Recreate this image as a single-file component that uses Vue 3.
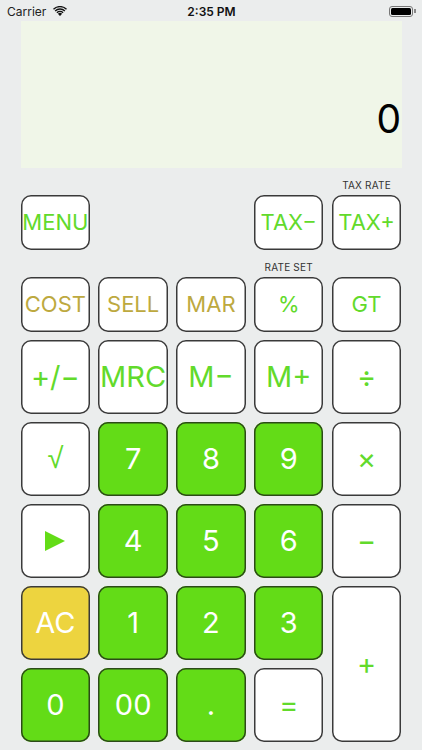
<script setup>
const keys = [
  { t: 'COST', c: 'white gold s24' },
  { t: 'SELL', c: 'white gold s24' },
  { t: 'MAR', c: 'white gold s24' },
  { t: '%', c: 'white s24', label: 'RATE SET' },
  { t: 'GT', c: 'white s24' },
  { t: '+/−', c: 'white s30' },
  { t: 'MRC', c: 'white s30' },
  { t: 'M−', c: 'white s30' },
  { t: 'M+', c: 'white s30' },
  { t: '÷', c: 'white s30' },
  { t: '√', c: 'white s30 root' },
  { t: '7', c: 'green s30' },
  { t: '8', c: 'green s30' },
  { t: '9', c: 'green s30' },
  { t: '×', c: 'white s30' },
  { t: '', c: 'white', play: true },
  { t: '4', c: 'green s30' },
  { t: '5', c: 'green s30' },
  { t: '6', c: 'green s30' },
  { t: '−', c: 'white s30' },
  { t: 'AC', c: 'yellow s30' },
  { t: '1', c: 'green s30' },
  { t: '2', c: 'green s30' },
  { t: '3', c: 'green s30' },
  { t: '+', c: 'white s30 plus' },
  { t: '0', c: 'green s30' },
  { t: '00', c: 'green s30' },
  { t: '.', c: 'green s30' },
  { t: '=', c: 'white s30' },
]
</script>

<template>
  <div class="page">
    <header class="status">
      <div class="left">
        <span>Carrier</span>
        <svg class="wifi" viewBox="0 0 16 12" width="14" height="10.5">
          <path d="M8 11.5 5.6 8.9a3.4 3.4 0 0 1 4.8 0Z" fill="#111" />
          <path d="M3.9 7.2a5.9 5.9 0 0 1 8.2 0l-1.1 1.2a4.3 4.3 0 0 0-6 0Z" fill="#111" />
          <path d="M1.9 5.1a8.8 8.8 0 0 1 12.2 0L13 6.3a7.2 7.2 0 0 0-10 0Z" fill="#111" />
          <path d="M0 3.1a11.6 11.6 0 0 1 16 0l-1.1 1.2a10 10 0 0 0-13.8 0Z" fill="#111" />
        </svg>
      </div>
      <div class="time">2:35 PM</div>
      <div class="right">
        <span class="battery"><span class="charge"></span></span>
        <span class="nub"></span>
      </div>
    </header>

    <section class="display">
      <span class="value">0</span>
    </section>

    <section class="pad top">
      <button class="key white s24">MENU</button>
      <button class="key white s24 tax-minus">TAX−</button>
      <button class="key white s24">
        <span class="label">TAX RATE</span>TAX+
      </button>
    </section>

    <section class="pad main">
      <button
        v-for="k in keys"
        :key="k.t || 'play'"
        class="key"
        :class="k.c"
      >
        <span v-if="k.label" class="label">{{ k.label }}</span>
        <svg v-if="k.play" class="play" viewBox="0 0 20 20" width="20" height="20">
          <path d="M0 0 20 10 0 20Z" fill="#63dc17" />
        </svg>
        <template v-else>{{ k.t }}</template>
      </button>
    </section>
  </div>
</template>

<style scoped>
.page {
  width: 422px;
  height: 750px;
  background: #ebeded;
  font-family: Inter, "Liberation Sans", sans-serif;
  overflow: hidden;
}
.status {
  height: 21px;
  display: flex;
  align-items: center;
  justify-content: space-between;
  padding: 1px 6px 0 7px;
  font-size: 12px;
  color: #222;
  box-sizing: border-box;
}
.left, .right {
  width: 120px;
  display: flex;
  align-items: center;
}
.left { gap: 7px; }
.right { justify-content: flex-end; }
.time {
  font-weight: 600;
  font-size: 12px;
  color: #111;
}
.battery {
  width: 24px;
  height: 11px;
  border: 1px solid #777;
  border-radius: 3px;
  padding: 1px;
  box-sizing: border-box;
  display: block;
}
.charge {
  display: block;
  height: 100%;
  background: #000;
  border-radius: 1.5px;
}
.nub {
  width: 1.5px;
  height: 4px;
  background: #888;
  margin-left: 1px;
}
.display {
  height: 147px;
  margin: 0 20px 0 21px;
  background: #f0f6e8;
  display: flex;
  align-items: flex-end;
  justify-content: flex-end;
  padding: 0 1px 30px 0;
  box-sizing: border-box;
}
.value {
  font-size: 39px;
  font-weight: 400;
  line-height: 1;
  color: #000;
}
.pad {
  margin-left: 20.6px;
  display: grid;
  grid-template-columns: repeat(5, 69.5px);
  column-gap: 8.3px;
  row-gap: 8px;
}
.top {
  margin-top: 27px;
  grid-template-rows: 55px;
}
.main {
  margin-top: 27px;
  grid-template-rows: 55px repeat(5, 74px);
}
.tax-minus { grid-column: 4; }
.key {
  position: relative;
  display: flex;
  align-items: center;
  justify-content: center;
  padding: 0 0 1px;
  border: none;
  box-shadow: inset 0 0 0 1.5px #3a3a3a;
  border-radius: 10px;
  font-family: inherit;
  font-weight: 400;
  white-space: nowrap;
  box-sizing: border-box;
}
.white { background: #fff; color: #62da2b; }
.green {
  background: #63dc17;
  color: #fff;
  box-shadow: inset 0 0 0 1.5px #2c4a18;
}
.yellow { background: #edd43f; color: #fff; }
.gold { color: #bda93f; }
.s24 { font-size: 22px; }
.s30 { font-size: 29px; }
.root { font-family: "Liberation Sans", sans-serif; }
.plus {
  grid-column: 5;
  grid-row: 5 / span 2;
}
.label {
  position: absolute;
  left: 0;
  right: 0;
  top: -16px;
  text-align: center;
  font-size: 10px;
  letter-spacing: 0.2px;
  color: #333;
}
</style>

<style>
html, body { margin: 0; background: #ebeded; }
</style>
